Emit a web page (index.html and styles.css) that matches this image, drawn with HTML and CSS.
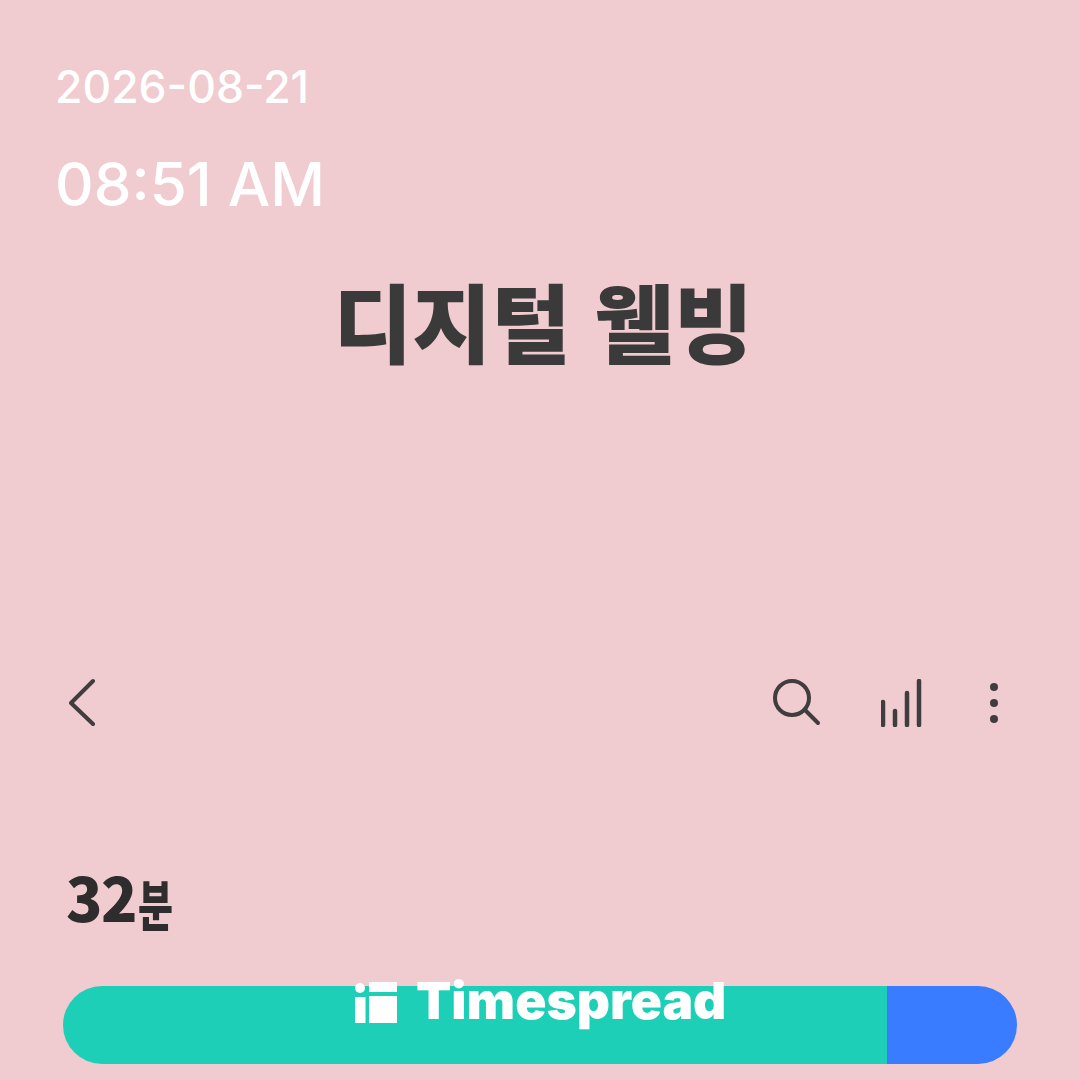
FILE: index.html
```html
<!DOCTYPE html>
<html lang="ko">
<head>
<meta charset="utf-8">
<title>디지털 웰빙</title>
<link rel="stylesheet" href="styles.css">
</head>
<body>
<main class="page">
  <header class="stamp">
    <div class="date">2026-08-21</div>
    <div class="time">08:51 AM</div>
  </header>
  <h1 class="title">디지털 웰빙</h1>
  <nav class="toolbar">
    <svg class="icon back" width="32" height="50" viewBox="0 0 32 50"><path d="M27 3 L5 25 L27 46"/></svg>
    <div class="actions">
      <svg class="icon" width="48" height="48" viewBox="0 0 48 48"><circle cx="19" cy="19" r="17"/><path d="M32 31 L45 44"/></svg>
      <svg class="icon bars" width="42" height="48" viewBox="0 0 42 48"><path d="M2 23V46M14 32V46M26 14V46M38 2V46"/></svg>
      <svg class="dots" width="12" height="44" viewBox="0 0 12 44"><circle cx="6" cy="6" r="4"/><circle cx="6" cy="22" r="4"/><circle cx="6" cy="38" r="4"/></svg>
    </div>
  </nav>
  <div class="total"><span class="num">32</span><span class="unit">분</span></div>
  <div class="bar">
    <div class="seg teal"></div>
    <div class="seg blue"></div>
  </div>
  <div class="mark">
    <svg width="42" height="41" viewBox="0 0 42 41"><circle cx="5" cy="6" r="5"/><rect x="0" y="15" width="10.500" height="26"/><rect x="14" y="0" width="28" height="10"/><rect x="14" y="14" width="28" height="27"/></svg>
    <span>Timespread</span>
  </div>
</main>
</body>
</html>
```

FILE: styles.css
```css
* { box-sizing: border-box; }
html, body { margin: 0; height: 100%; }
body { background: #f0cbcf; overflow: hidden; }
.page {
  position: relative;
  width: 1080px;
  height: 1080px;
  padding-top: 58px;
  display: flex;
  flex-direction: column;
  font-family: Inter, "Noto Sans CJK KR", sans-serif;
}
.stamp { padding-left: 55px; color: #fff; font-weight: 500; }
.date { font-size: 44.500px; line-height: 58px; }
.time { font-size: 60px; line-height: 76px; margin-top: 30px; }
.title {
  margin: 43px 0 0;
  padding-left: 6px;
  text-align: center;
  font-family: "Noto Sans CJK KR", sans-serif;
  font-size: 86px;
  line-height: 110px;
  font-weight: 900;
  color: #3a3a3a;
  filter: blur(0.6px);
}
.toolbar {
  margin-top: 303px;
  padding: 0 80px 0 66px;
  display: flex;
  justify-content: space-between;
  align-items: center;
  filter: blur(0.5px);
}
.actions { display: flex; align-items: center; gap: 60px; }
.actions .bars { margin-right: 5px; }
.icon { fill: none; stroke: #3f3d3e; stroke-width: 4; stroke-linecap: round; stroke-linejoin: round; }
.bars { stroke-width: 4.500; }
.dots { fill: #3f3d3e; }
.total {
  margin-top: 133px;
  padding-left: 66px;
  display: flex;
  align-items: flex-end;
  color: #2e2c2d;
  font-family: "Noto Sans CJK KR", sans-serif;
  font-weight: 900;
  filter: blur(0.5px);
}
.num { font-size: 60px; line-height: 70px; letter-spacing: -1.500px; }
.unit { font-size: 38px; line-height: 56px; margin-left: 2px; transform: scaleY(1.450); }
.bar {
  position: absolute;
  left: 63px;
  top: 986px;
  width: 954px;
  height: 78px;
  display: flex;
  border-radius: 39px;
  overflow: hidden;
}
.seg { height: 100%; }
.teal { width: 824px; background: #1dcfb7; }
.blue { flex: 1; background: #3a7cff; }
.mark {
  position: absolute;
  left: 355px;
  top: 968px;
  display: flex;
  align-items: center;
  gap: 19px;
  color: #fff;
}
.mark svg { fill: #fff; margin-top: 5px; }
.mark span { font-size: 51.500px; line-height: 64px; font-weight: 900; font-family: Inter, sans-serif; }
```
